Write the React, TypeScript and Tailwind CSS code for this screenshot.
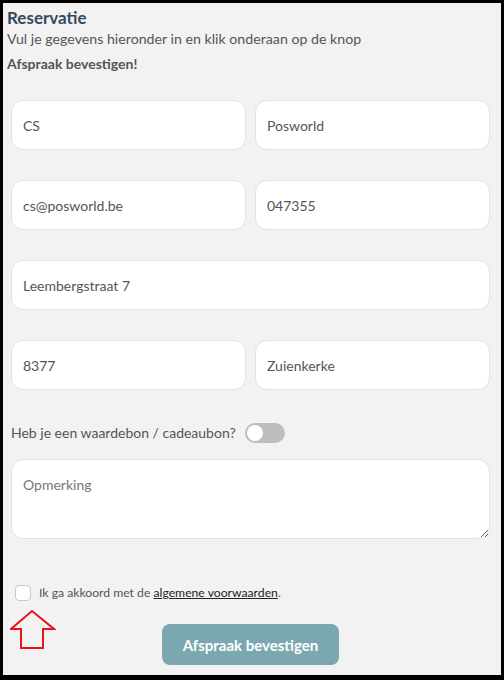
export default function App() {
  const field =
    "h-[50px] w-full rounded-xl border border-[#e3e3e3] bg-white px-[11px] text-[14px] text-[#555] outline-none";

  return (
    <div
      className="h-[680px] w-[504px] border-b-[5px] border-l-[3px] border-r-[3px] border-t-[3px] border-black bg-[#f2f2f2] pl-[4px] pr-[11px]"
      style={{ fontFamily: "Lato, 'Noto Sans', sans-serif" }}
    >
      <h2 className="mt-[5px] text-[17px] font-bold leading-5 text-[#34495e]">Reservatie</h2>
      <p className="mt-[1px] text-[14.2px] leading-5 text-[#555]">
        Vul je gegevens hieronder in en klik onderaan op de knop
      </p>
      <p className="mt-[5px] text-[14px] font-bold leading-5 text-[#555]">Afspraak bevestigen!</p>

      <div className="mt-[26px] flex flex-col gap-[30px] pl-[4px]">
        <div className="grid grid-cols-2 gap-[9px]">
          <input className={field} defaultValue="CS" />
          <input className={field} defaultValue="Posworld" />
        </div>
        <div className="grid grid-cols-2 gap-[9px]">
          <input className={field} defaultValue="cs@posworld.be" />
          <input className={field} defaultValue="047355" />
        </div>
        <input className={field} defaultValue="Leembergstraat 7" />
        <div className="grid grid-cols-2 gap-[9px]">
          <input className={field} defaultValue="8377" />
          <input className={field} defaultValue="Zuienkerke" />
        </div>
      </div>

      <div className="mt-[32px] flex items-center gap-[9px] pl-[4px]">
        <span className="text-[14px] text-[#555]">Heb je een waardebon / cadeaubon?</span>
        <span className="flex h-[20px] w-[40px] items-center rounded-full bg-[#bdbdbd] px-[2px]">
          <span className="h-[16px] w-[16px] rounded-full bg-white" />
        </span>
      </div>

      <div className="mt-[16px] pl-[4px]">
        <textarea
          className="block h-[80px] w-full resize-y rounded-xl border border-[#e3e3e3] bg-white px-[11px] pt-[14px] text-[14px] text-[#555] outline-none placeholder:text-[#777]"
          placeholder="Opmerking"
        />
      </div>

      <label className="mt-[45px] flex items-center gap-[8px] pl-[8px]">
        <span className="h-[16px] w-[16px] rounded-[4px] border border-[#b8cde0] bg-white" />
        <span className="text-[12.2px] text-[#555]">
          Ik ga akkoord met de{" "}
          <a className="text-[#222] underline" href="#">
            algemene voorwaarden
          </a>
          .
        </span>
      </label>

      <div className="relative mt-[22px] flex justify-center pl-[4px]">
        <svg className="absolute left-[3px] top-[-15px]" width="46" height="42" viewBox="0 0 46 42">
          <polygon
            points="22,2 44,20 33,20 33,39 11,39 11,20 1,20"
            fill="none"
            stroke="#e8141b"
            strokeWidth="2"
          />
        </svg>
        <button className="h-[41px] w-[177px] rounded-lg bg-[#7aa7b0] text-[15px] font-bold text-white">
          Afspraak bevestigen
        </button>
      </div>
    </div>
  );
}
